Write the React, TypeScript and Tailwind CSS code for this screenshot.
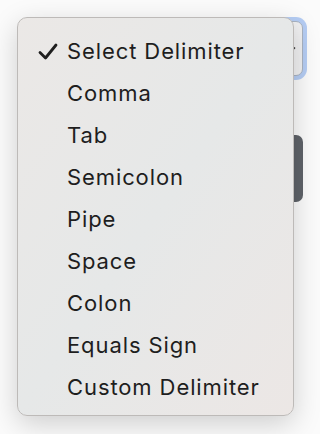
import React from "react";

const options = [
    "Select Delimiter",
    "Comma",
    "Tab",
    "Semicolon",
    "Pipe",
    "Space",
    "Colon",
    "Equals Sign",
    "Custom Delimiter",
];

const App: React.FC = () => {
    return (
        <div
            className="relative w-[320px] h-[434px] overflow-hidden bg-[#fbfbfb]"
            style={{ fontFamily: "Inter, 'Noto Sans', sans-serif" }}
        >
            {/* select + button behind the open menu */}
            <div className="flex flex-col pl-[36px] pr-[17px] pt-[21px]">
                <div className="h-[55px] rounded-[7px] border border-[#a9b3c2] bg-[#f1f1f2] ring-4 ring-[#b5cdf4] flex items-center justify-end pr-[6px]">
                    <svg width="8" height="6" viewBox="0 0 8 6">
                        <path d="M1 1.5 L4 4.5 L7 1.5" fill="none" stroke="#333" strokeWidth="1.5" />
                    </svg>
                </div>
                <div className="mt-[59px] h-[67px] rounded-[7px] bg-[#5f6369]" />
            </div>

            {/* open dropdown */}
            <div className="absolute left-[17px] top-[17px] w-[277px] h-[399px] rounded-[10px] border border-[#bdbab8] bg-gradient-to-br from-[#ebe8e6] via-[#e6e8e8] to-[#ece7e5] shadow-[0_8px_28px_rgba(0,0,0,0.18)] pt-[12px] pb-[9px]">
                {options.map((opt, i) => (
                    <div key={opt} className="relative h-[42px] flex items-center pl-[49px] text-[22px] text-[#1e1e1e] tracking-[0.9px]">
                        {i === 0 && (
                            <svg className="absolute left-[20px] top-[13px]" width="20" height="17" viewBox="0 0 20 17">
                                <path d="M2 9.5 L7.5 15 L18 2" fill="none" stroke="#1f1f1f" strokeWidth="2.8" strokeLinecap="round" strokeLinejoin="round" />
                            </svg>
                        )}
                        {opt}
                    </div>
                ))}
            </div>
        </div>
    );
};

export default App;
